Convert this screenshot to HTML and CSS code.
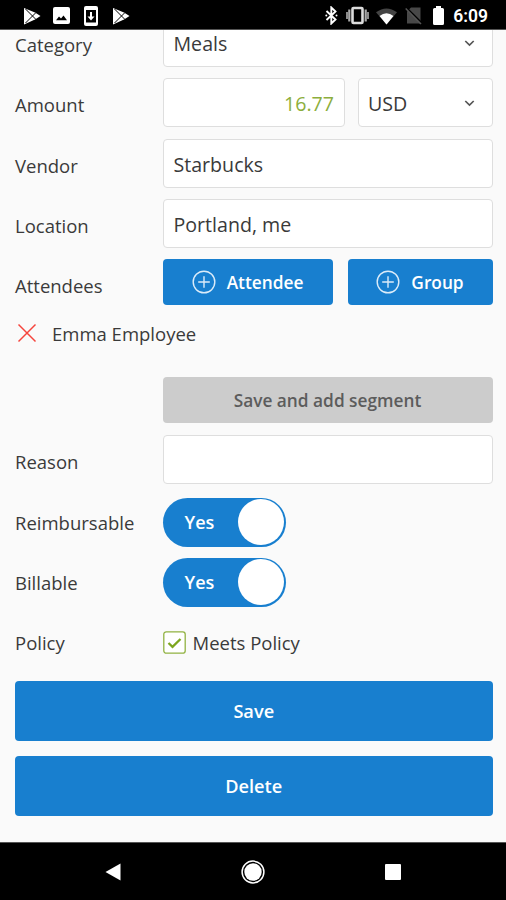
FILE: index.html
```
<!DOCTYPE html>
<html lang="en">
<head>
  <meta charset="UTF-8" />
  <meta name="viewport" content="width=device-width, initial-scale=1.0"/>
  <title>Expense</title>
  <link rel="stylesheet" href="styles.css">
</head>
<body>

<header class="status-bar">
  <div class="status-left">
    <svg class="icon-play" width="18" height="18" viewBox="0 0 18 18">
      <path d="M1 1 L12 5.500 L17.500 9 L12 12.500 L1 17.500 Z" fill="#fff"/>
      <path d="M2.500 2 L13 12.500 M2.500 16 L13 5.500" stroke="#000" stroke-width="1" fill="none"/>
    </svg>
    <svg class="icon-image" width="17" height="17" viewBox="0 0 17 17">
      <rect width="17" height="17" rx="2" fill="#fff"/>
      <path d="M3 13.300 L6 9.500 L8 11.500 L10.500 8.500 L14 13.300 Z" fill="#000"/>
    </svg>
    <svg class="icon-update" width="14" height="20" viewBox="0 0 14 20">
      <rect width="14" height="20" rx="2" fill="#fff"/>
      <rect x="2" y="4" width="10" height="12.500" fill="#000"/>
      <path d="M6 6 H8 V10.500 H10.500 L7 14.500 L3.500 10.500 H6 Z" fill="#fff"/>
    </svg>
    <svg class="icon-play" width="18" height="18" viewBox="0 0 18 18">
      <path d="M1 1 L12 5.500 L17.500 9 L12 12.500 L1 17.500 Z" fill="#fff"/>
      <path d="M2.500 2 L13 12.500 M2.500 16 L13 5.500" stroke="#000" stroke-width="1" fill="none"/>
    </svg>
  </div>
  <div class="status-right">
    <svg class="icon-bluetooth" width="13" height="19" viewBox="0 0 13 19">
      <path d="M1.500 5 L10.500 13.500 L6.300 17.500 V1.500 L10.500 5.500 L1.500 14" fill="none" stroke="#fff" stroke-width="1.900"/>
      <circle cx="1.300" cy="9.500" r="1" fill="#fff"/>
      <circle cx="11.500" cy="9.500" r="1" fill="#fff"/>
    </svg>
    <svg class="icon-vibrate" width="23" height="19" viewBox="0 0 23 19">
      <rect x="6.500" y="2" width="10" height="15" rx="1" fill="none" stroke="#ddd" stroke-width="2.600"/>
      <path d="M3.300 3.500 V15.500 M19.700 3.500 V15.500" stroke="#aaa" stroke-width="2.200"/>
      <path d="M1 6 V13 M22 6 V13" stroke="#999" stroke-width="1.800"/>
    </svg>
    <svg class="icon-wifi" width="21" height="17" viewBox="0 0 22 17">
      <path d="M0 4 Q11 -4 22 4 L11 17 Z" fill="#444"/>
      <path d="M3.700 8 Q11 2 18.300 8 L11 17 Z" fill="#fff"/>
    </svg>
    <svg class="icon-sim" width="18" height="19" viewBox="0 0 18 19">
      <path d="M6 1.500 H15.500 V17.500 H2 V5.500 Z" fill="#484848"/>
      <path d="M2 2.500 L17.500 18" stroke="#000" stroke-width="2"/>
      <path d="M.7 2.500 L16 18" stroke="#555" stroke-width="1.500"/>
    </svg>
    <svg class="icon-battery" width="11" height="19" viewBox="0 0 11 19">
      <path d="M3 0 H8 V2 H9.500 Q11 2 11 3.500 V17.500 Q11 19 9.500 19 H1.500 Q0 19 0 17.500 V3.500 Q0 2 1.500 2 H3 Z" fill="#fff"/>
    </svg>
    <span class="clock">6:09</span>
  </div>
</header>

<main class="screen">
  <div class="row">
    <div class="label">Category</div>
    <div class="field">
      <span>Meals</span>
      <svg class="arrow" width="11" height="7" viewBox="0 0 11 7"><path d="M1.300 1 L5.500 5 L9.700 1"/></svg>
    </div>
  </div>

  <div class="row">
    <div class="label">Amount</div>
    <div class="field amount">16.77</div>
    <div class="field currency">
      <span>USD</span>
      <svg class="arrow" width="11" height="7" viewBox="0 0 11 7"><path d="M1.300 1 L5.500 5 L9.700 1"/></svg>
    </div>
  </div>

  <div class="row">
    <div class="label">Vendor</div>
    <div class="field">Starbucks</div>
  </div>

  <div class="row">
    <div class="label">Location</div>
    <div class="field">Portland, me</div>
  </div>

  <div class="row attendees">
    <div class="label">Attendees</div>
    <button class="btn btn-attendee">
      <svg class="plus" width="24" height="24" viewBox="0 0 24 24"><circle cx="12" cy="12" r="10.800"/><path d="M6.200 12 H17.800 M12 6.200 V17.800"/></svg>
      Attendee
    </button>
    <button class="btn btn-group">
      <svg class="plus" width="24" height="24" viewBox="0 0 24 24"><circle cx="12" cy="12" r="10.800"/><path d="M6.200 12 H17.800 M12 6.200 V17.800"/></svg>
      Group
    </button>
  </div>

  <div class="person">
    <svg width="20" height="20" viewBox="0 0 20 20"><path d="M1.500 1.500 L18.500 18.500 M18.500 1.500 L1.500 18.500" stroke="#f5453d" stroke-width="1.500"/></svg>
    <span>Emma Employee</span>
  </div>

  <div class="segment">
    <button class="btn btn-segment" disabled>Save and add segment</button>
  </div>

  <div class="row reason">
    <div class="label">Reason</div>
    <div class="field"></div>
  </div>

  <div class="row switch">
    <div class="label">Reimbursable</div>
    <div class="toggle"><span>Yes</span><i class="knob"></i></div>
  </div>

  <div class="row switch">
    <div class="label">Billable</div>
    <div class="toggle"><span>Yes</span><i class="knob"></i></div>
  </div>

  <div class="row policy">
    <div class="label">Policy</div>
    <svg width="23" height="23" viewBox="0 0 23 23">
      <rect x=".8" y=".8" width="21.400" height="21.400" rx="2.500" fill="#fff" stroke="#91b242" stroke-width="1.300"/>
      <path d="M5.500 12 L9.500 15.800 L17.500 8" fill="none" stroke="#7da61e" stroke-width="2.300"/>
    </svg>
    <span class="policy-text">Meets Policy</span>
  </div>

  <div class="actions">
    <button class="btn btn-wide">Save</button>
    <button class="btn btn-wide">Delete</button>
  </div>
</main>

<footer class="nav-bar">
  <svg width="16" height="18" viewBox="0 0 16 18"><path d="M15.500 .5 V17.500 L.5 9 Z" fill="#fff"/></svg>
  <svg width="24" height="24" viewBox="0 0 24 24"><circle cx="12" cy="12" r="10.900" fill="none" stroke="#fff" stroke-width="1.500"/><circle cx="12" cy="12" r="8.700" fill="#fff"/></svg>
  <svg width="16" height="16" viewBox="0 0 16 16"><rect width="16" height="16" rx="1" fill="#fff"/></svg>
</footer>

</body>
</html>
```
FILE: styles.css
```
* {
  box-sizing: border-box;
}

body {
  margin: 0;
  height: 900px;
  display: flex;
  flex-direction: column;
  overflow: hidden;
  background: #fafafa;
  color: #3a3a3a;
  font-family: "Open Sans", "Noto Sans", sans-serif;
  font-size: 18.5px;
}

svg {
  display: block;
  flex: none;
}

/* status bar */
.status-bar {
  height: 30px;
  flex: none;
  display: flex;
  justify-content: space-between;
  align-items: center;
  padding: 2px 18px 0 23px;
  background: #000;
  border-bottom: 1px solid #555;
}

.status-left, .status-right {
  display: flex;
  align-items: center;
}

.icon-image {
  margin-left: 12px;
}

.icon-update {
  margin: 0 14px;
}

.icon-vibrate {
  margin-left: 8px;
}

.icon-wifi {
  margin: 2px 8px 0 7px;
}

.icon-battery {
  margin: 0 9px 0 10px;
}

.clock {
  color: #fff;
  font-family: Roboto, sans-serif;
  font-size: 17.5px;
  font-weight: 600;
  line-height: 20px;
}

/* form */
.screen {
  flex: 1;
  min-height: 0;
  overflow: hidden;
  padding: 0 13.5px 0 15px;
}

.row {
  display: flex;
  height: 49px;
  margin-bottom: 11.25px;
}

.row:first-child {
  margin-top: -12px;
}

.label {
  width: 147.5px;
  flex: none;
  padding-top: 2px;
  line-height: 49px;
}

.field {
  flex: 1;
  display: flex;
  justify-content: space-between;
  align-items: center;
  padding: 2px 17px 0 10px;
  background: #fff;
  border: 1.5px solid #dedede;
  border-radius: 4px;
  font-size: 19.6px;
}

.amount {
  flex: none;
  width: 182.5px;
  justify-content: flex-end;
  padding-right: 10px;
  color: #8cae3c;
}

.currency {
  margin-left: 13px;
  padding-left: 9px;
}

.arrow path {
  fill: none;
  stroke: #555;
  stroke-width: 1.7;
}

.btn {
  display: flex;
  justify-content: center;
  align-items: center;
  height: 46px;
  padding: 0;
  border: none;
  border-radius: 4px;
  background: #187fcf;
  color: #fff;
  font-family: inherit;
  font-size: 17.3px;
  font-weight: 600;
}

.attendees {
  height: 46px;
  margin: 0 0 15px;
}

.btn-attendee, .btn-group {
  gap: 11px;
}

.btn-attendee {
  width: 170px;
}

.btn-group {
  flex: 1;
  margin-left: 15px;
}

.plus {
  fill: none;
  stroke: #dcecf9;
  stroke-width: 1.4;
}

.person {
  display: flex;
  align-items: center;
  gap: 15.5px;
  height: 26px;
  padding-left: 1.5px;
}

.segment {
  padding: 31px 0 12px 147.5px;
}

.btn-segment {
  width: 100%;
  background: #ccc;
  color: #5c5c5c;
}

.reason {
  margin-bottom: 13.5px;
}

.switch .label, .policy .label {
  padding-top: 0;
}

/* yes/no switch */
.toggle {
  display: flex;
  justify-content: space-between;
  align-items: center;
  width: 123.5px;
  padding: 0 2px 0 22px;
  border-radius: 25px;
  background: #187fcf;
  color: #fff;
  font-size: 18px;
  font-weight: 600;
}

.knob {
  width: 46px;
  height: 46px;
  border-radius: 50%;
  background: #fff;
}

.policy {
  align-items: center;
  margin-bottom: 14px;
}

.policy-text {
  margin-left: 7px;
}

.actions {
  display: flex;
  flex-direction: column;
  gap: 15px;
}

.btn-wide {
  height: 60px;
  font-size: 18.2px;
}

/* android navigation */
.nav-bar {
  flex: none;
  display: flex;
  justify-content: space-between;
  align-items: center;
  height: 58px;
  padding: 0 105px;
  background: #000;
  border-top: 1px solid #555;
}
```
